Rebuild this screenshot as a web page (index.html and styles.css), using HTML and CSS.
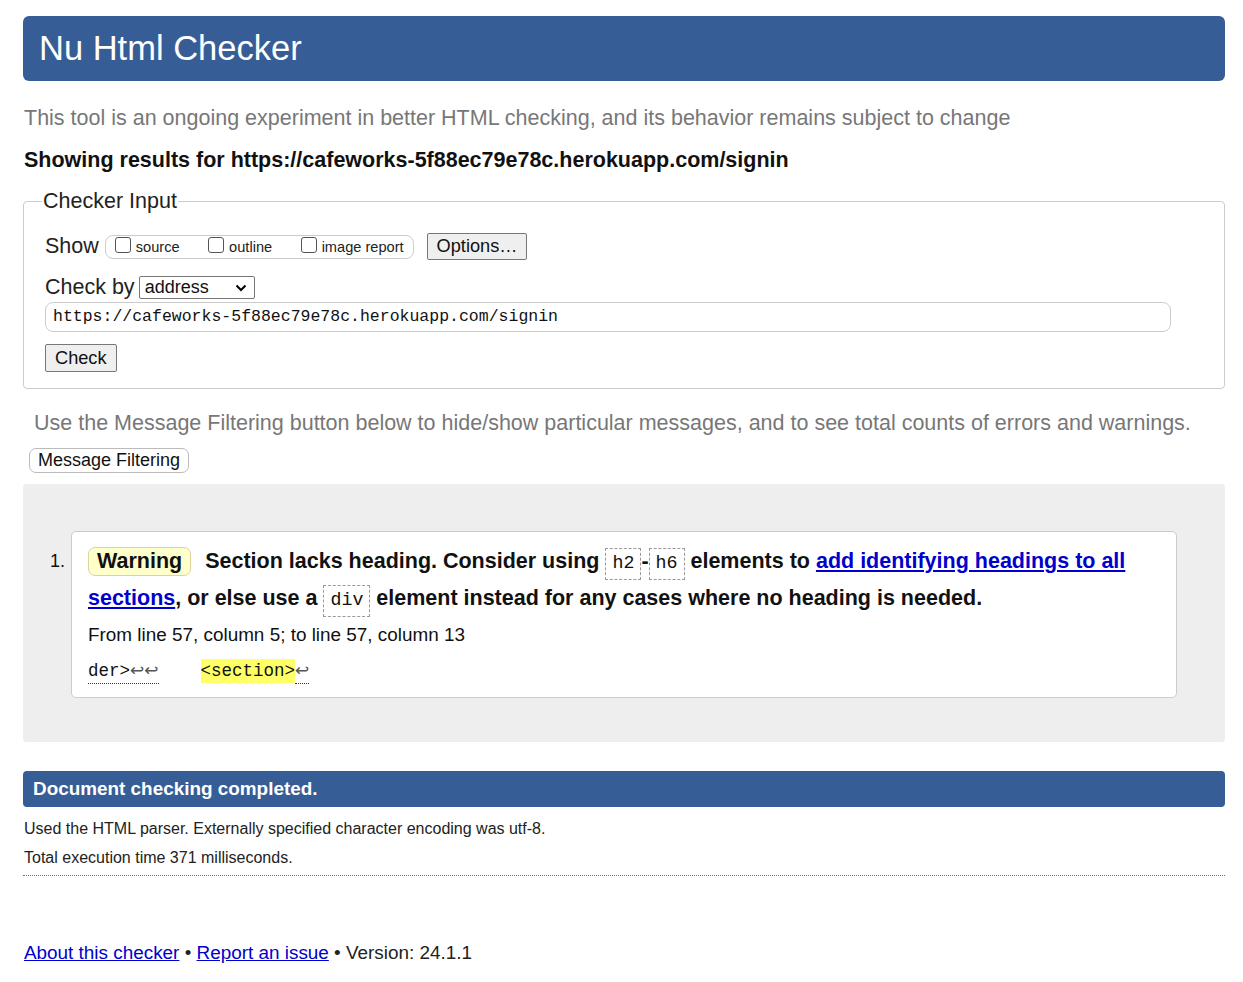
FILE: index.html
```html
<!DOCTYPE html>
<html lang="en">
<head>
<meta charset="utf-8">
<title>Nu Html Checker</title>
<link rel="stylesheet" href="styles.css">
</head>
<body>
<h1 class="title">Nu Html Checker</h1>
<p class="intro">This tool is an ongoing experiment in better HTML checking, and its behavior remains subject to change</p>
<p class="showing">Showing results for https://cafeworks-5f88ec79e78c.herokuapp.com/signin</p>

<fieldset class="input-box">
  <legend>Checker Input</legend>
  <div class="row show-row">
    <span class="lbl">Show</span>
    <span class="pill">
      <label><span class="cb"></span>source</label>
      <label><span class="cb"></span>outline</label>
      <label><span class="cb"></span>image report</label>
    </span>
    <span class="btn options">Options…</span>
  </div>
  <div class="row checkby-row">
    <span class="lbl">Check by</span>
    <span class="select">address
      <svg class="chev" width="12" height="8" viewBox="0 0 12 8"><path d="M1.5 1.5 L6 6 L10.5 1.5" fill="none" stroke="#000" stroke-width="2"/></svg>
    </span>
  </div>
  <div class="url">https://cafeworks-5f88ec79e78c.herokuapp.com/signin</div>
  <span class="btn check">Check</span>
</fieldset>

<p class="filter-note">Use the Message Filtering button below to hide/show particular messages, and to see total counts of errors and warnings.</p>
<span class="btn filter">Message Filtering</span>

<div class="results">
  <ol class="msgs">
    <li class="msg">
      <span class="num">1.</span>
      <div class="card">
        <p class="msg-text"><span class="badge">Warning</span> <span class="bold">Section lacks heading. Consider using <code>h2</code>-<code>h6</code> elements to <a href="#">add identifying headings to all sections</a>, or else use a <code>div</code> element instead for any cases where no heading is needed.</span></p>
        <p class="loc">From line 57, column 5; to line 57, column 13</p>
        <p class="extract"><span class="ul">der&gt;<span class="lf">↩↩</span></span><span class="gap"></span><mark>&lt;section&gt;</mark><span class="ul"><span class="lf">↩</span></span></p>
      </div>
    </li>
  </ol>
</div>

<h2 class="done">Document checking completed.</h2>
<p class="detail">Used the HTML parser. Externally specified character encoding was utf-8.</p>
<p class="detail">Total execution time 371 milliseconds.</p>
<hr class="sep">

<p class="footer"><a href="#">About this checker</a> • <a href="#">Report an issue</a> • Version: 24.1.1</p>
</body>
</html>
```

FILE: styles.css
```css
* { box-sizing: border-box; }
html, body { margin: 0; padding: 0; background: #fff; }
body {
  font-family: "Liberation Sans", Arial, sans-serif;
  color: #111;
  padding: 16px 18px 0 23px;
}
p { margin: 0; }

.title {
  margin: 0;
  background: #365d95;
  color: #fff;
  font-weight: normal;
  font-size: 34.5px;
  line-height: 65px;
  height: 65px;
  padding: 0 16px;
  border-radius: 6px;
}
.intro {
  color: #777;
  font-size: 21.5px;
  margin-top: 25px;
  line-height: 24px;
  padding-left: 1px;
}
.showing {
  font-weight: bold;
  font-size: 21.5px;
  margin-top: 18px;
  line-height: 24px;
  padding-left: 1px;
}

.input-box {
  margin: 17px 0 0 0;
  border: 1px solid #ccc;
  border-radius: 4px;
  padding: 14px 21px 16px 21px;
  min-width: 0;
}
.input-box legend {
  font-size: 21.5px;
  line-height: 24px;
  padding: 0 1px;
  margin-left: -3px;
  color: #222;
}
.row { display: flex; align-items: center; }
.lbl { font-size: 21.5px; color: #222; }
.show-row { margin-top: 6px; }
.pill {
  display: inline-flex;
  align-items: center;
  border: 1px solid #ccc;
  border-radius: 8px;
  height: 24px;
  margin-left: 6px;
  padding: 0 9px 0 9px;
  font-size: 14.6px;
  gap: 28.5px;
}
.pill label { display: inline-flex; align-items: flex-end; color: #222; }
.cb {
  display: inline-block;
  width: 16px; height: 16px;
  border: 1px solid #555;
  border-radius: 3px;
  margin-right: 5px;
  position: relative; top: -2px;
  background: #fff;
}
.btn {
  display: inline-block;
  border: 1px solid #777;
  background: #efefef;
  border-radius: 2px;
  color: #111;
  font-size: 18.2px;
}
.options {
  margin-left: 13px;
  height: 27px;
  line-height: 25px;
  padding: 0 9px;
}
.checkby-row { margin-top: 15px; }
.select {
  display: inline-flex;
  align-items: center;
  justify-content: space-between;
  width: 116px;
  height: 23px;
  border: 1px solid #767676;
  border-radius: 2px;
  margin-left: 4px;
  padding: 0 7px 0 5px;
  font-size: 18px;
  color: #111;
}
.url {
  margin-top: 2px;
  width: 1126px;
  height: 30px;
  border: 1px solid #ccc;
  border-radius: 8px;
  font-family: "Liberation Mono", "DejaVu Sans Mono", monospace;
  font-size: 16.5px;
  line-height: 28px;
  padding-left: 7px;
  color: #111;
}
.check {
  margin-top: 12px;
  height: 28px;
  line-height: 26px;
  padding: 0 9px;
}

.filter-note {
  color: #777;
  font-size: 21.5px;
  margin-top: 22px;
  padding-left: 11px;
  line-height: 24px;
}
.filter {
  margin-top: 13px;
  margin-left: 6px;
  background: #fff;
  border: 1px solid #bbb;
  border-radius: 7px;
  height: 25px;
  line-height: 23px;
  padding: 0 8px;
  font-size: 18px;
}

.results {
  margin-top: 11px;
  background: #eee;
  border-radius: 3px;
  padding: 47px 48px 44px 27px;
}
.msgs { list-style: none; margin: 0; padding: 0; }
.msg { display: flex; align-items: flex-start; }
.num { font-size: 18px; line-height: 24px; width: 21px; margin-top: 18px; color: #111; }
.card {
  flex: 1;
  background: #fff;
  border: 1px solid #ccc;
  border-radius: 5px;
  padding: 11px 16px 13px 16px;
}
.msg-text {
  font-size: 21.5px;
  line-height: 37px;
  font-weight: bold;
  color: #111;
}
.badge {
  display: inline-block;
  background: #ffc;
  border: 1px solid #ddd49a;
  border-radius: 7px;
  padding: 0 8px;
  line-height: 27px;
  margin-right: 8px;
}
.bold a { color: #00c; text-decoration: underline; }
code {
  font-family: "Liberation Mono", "DejaVu Sans Mono", monospace;
  font-weight: normal;
  font-size: 18.3px;
  line-height: 1;
  border: 1px dashed #999;
  padding: 4px 6px 6px 6px;
}
.loc { font-size: 18.9px; line-height: 24px; margin-top: 6px; color: #111; }
.extract {
  font-family: "Liberation Mono", "DejaVu Sans Mono", monospace;
  font-size: 17.5px;
  line-height: 24px;
  margin-top: 11px;
  color: #111;
  display: flex;
  align-items: center;
}
.ul { border-bottom: 1px dotted #333; }
.lf { color: #555; }
.ul .lf { font-family: "DejaVu Sans", sans-serif; font-size: 17px; }
.gap { display: inline-block; width: 42px; }
mark { background: #ff6; color: #111; }

.done {
  margin: 29px 0 0 0;
  background: #365d95;
  color: #fff;
  font-size: 18.9px;
  font-weight: bold;
  height: 36px;
  line-height: 36px;
  padding: 0 10px;
  border-radius: 4px;
}
.detail { font-size: 16px; line-height: 20px; margin-top: 12px; color: #222; padding-left: 1px; }
.detail + .detail { margin-top: 9px; }
.sep {
  margin: 7px 0 0 0;
  border: 0;
  border-top: 1px dotted #777;
}
.footer { margin-top: 66px; font-size: 18.9px; color: #222; padding-left: 1px; }
.footer a { color: #00c; }
```
